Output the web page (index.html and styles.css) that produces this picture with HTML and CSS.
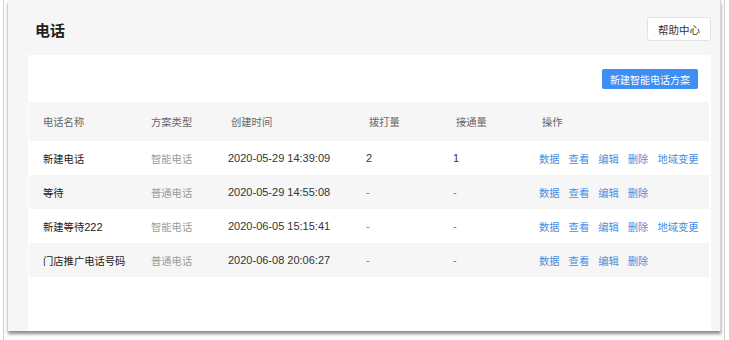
FILE: index.html
```html
<!DOCTYPE html>
<html lang="zh">
<head>
<meta charset="utf-8">
<link rel="stylesheet" href="styles.css">
</head>
<body>
<div class="frame">
  <div class="window">
    <div class="topbar">
      <h1 class="title">电话</h1>
      <button class="btn-help">帮助中心</button>
    </div>
    <div class="card">
      <div class="toolbar">
        <button class="btn-primary">新建智能电话方案</button>
      </div>
      <table class="tbl">
        <colgroup>
          <col class="c1"><col class="c2"><col class="c3"><col class="c4"><col class="c5"><col class="c6">
        </colgroup>
        <thead>
          <tr>
            <th>电话名称</th><th>方案类型</th><th class="sh">创建时间</th><th class="sh">拨打量</th><th class="sh">接通量</th><th class="sh">操作</th>
          </tr>
        </thead>
        <tbody>
          <tr>
            <td class="name">新建电话</td><td class="type">智能电话</td><td class="date">2020-05-29 14:39:09</td><td class="num">2</td><td class="num">1</td>
            <td><div class="ops"><a>数据</a><a>查看</a><a>编辑</a><a>删除</a><a>地域变更</a></div></td>
          </tr>
          <tr>
            <td class="name">等待</td><td class="type">普通电话</td><td class="date">2020-05-29 14:55:08</td><td class="dash">-</td><td class="dash">-</td>
            <td><div class="ops"><a>数据</a><a>查看</a><a>编辑</a><a>删除</a></div></td>
          </tr>
          <tr>
            <td class="name">新建等待<span class="digits">222</span></td><td class="type">智能电话</td><td class="date">2020-06-05 15:15:41</td><td class="dash">-</td><td class="dash">-</td>
            <td><div class="ops"><a>数据</a><a>查看</a><a>编辑</a><a>删除</a><a>地域变更</a></div></td>
          </tr>
          <tr>
            <td class="name">门店推广电话号码</td><td class="type">普通电话</td><td class="date">2020-06-08 20:06:27</td><td class="dash">-</td><td class="dash">-</td>
            <td><div class="ops"><a>数据</a><a>查看</a><a>编辑</a><a>删除</a></div></td>
          </tr>
        </tbody>
      </table>
    </div>
  </div>
</div>
</body>
</html>
```
FILE: styles.css
```css
html, body {
  margin: 0;
  padding: 0;
  background: #ffffff;
}
body {
  font-family: "Liberation Sans", "Noto Sans CJK SC", sans-serif;
  font-size: 10.3px;
  color: #333;
}
.frame {
  box-sizing: border-box;
  width: 722px;
  height: 340px;
  margin-left: 3px;
  border-left: 1px solid #cfcfcf;
  border-right: 1px solid #cfcfcf;
  padding: 0 3px 0 4px;
}
.window {
  box-sizing: border-box;
  height: 331px;
  background: #f6f6f6;
  border-right: 1px solid #d6d6d6;
  box-shadow: 0 3px 3px rgba(0, 0, 0, 0.45);
  padding: 0 9px 0 20px;
  display: flex;
  flex-direction: column;
}
.topbar {
  height: 55px;
  display: flex;
  align-items: center;
  justify-content: space-between;
  padding: 3px 0 0 7px;
  box-sizing: border-box;
}
.title {
  margin: 0;
  font-family: "Noto Sans CJK SC", sans-serif;
  font-size: 15px;
  font-weight: bold;
  color: #1f1f1f;
}
.btn-help {
  box-sizing: border-box;
  width: 64px;
  height: 24px;
  background: #fff;
  border: 1px solid #e2e2e2;
  border-radius: 3px;
  font-family: "Noto Sans CJK SC", sans-serif;
  font-size: 10.5px;
  color: #333;
  padding: 0;
}
.card {
  flex: 1;
  background: #fff;
  display: flex;
  flex-direction: column;
}
.toolbar {
  display: flex;
  justify-content: flex-end;
  padding: 14px 13px 13px 0;
}
.btn-primary {
  box-sizing: border-box;
  width: 96px;
  height: 20px;
  background: #3f8ef3;
  border: none;
  border-radius: 2px;
  color: #fff;
  font-family: "Noto Sans CJK SC", sans-serif;
  font-size: 10px;
  padding: 0;
}
.tbl {
  width: 680px;
  margin-left: 1px;
  border-collapse: collapse;
  table-layout: fixed;
}
.c1 { width: 108px; }
.c2 { width: 77px; }
.c3 { width: 138px; }
.c4 { width: 87px; }
.c5 { width: 86px; }
.c6 { width: 184px; }
.tbl th {
  height: 39px;
  background: #f6f6f6;
  text-align: left;
  font-weight: normal;
  color: #666;
  padding: 0 0 0 14px;
  white-space: nowrap;
}
.tbl th.sh { padding-left: 17px; }
.tbl td {
  height: 34px;
  padding: 0 0 0 14px;
  white-space: nowrap;
}
.tbl tbody tr:nth-child(even) td { background: #f6f6f6; }
.name { color: #222; }
.digits { font-size: 11px; }
.type { color: #9a9a9a; }
.date, .num { color: #333; font-size: 11px; }
.dash { color: #777; font-size: 11px; }
.ops {
  display: flex;
  gap: 9px;
}
.ops a {
  color: #4a8fe0;
  cursor: pointer;
}
```
